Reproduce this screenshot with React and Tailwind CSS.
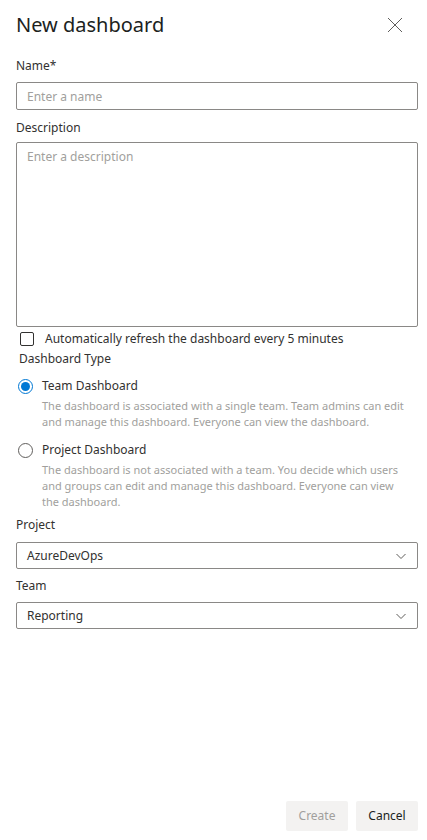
import React, { useState } from "react";

const font = { fontFamily: '"Segoe UI", "Noto Sans", "Open Sans", sans-serif' };

const Chevron = () => (
  <svg width="12" height="12" viewBox="0 0 12 12" fill="none" stroke="#605e5c" strokeWidth="1">
    <path d="M1.5 4l4.5 4.5L10.5 4" />
  </svg>
);

const Radio = ({ checked }) =>
  checked ? (
    <span className="w-[15px] h-[15px] rounded-full border-[1.5px] border-[#0078d4] flex items-center justify-center shrink-0">
      <span className="w-[9px] h-[9px] rounded-full bg-[#0078d4]" />
    </span>
  ) : (
    <span className="w-[15px] h-[15px] rounded-full border border-[#605e5c] shrink-0" />
  );

const Dropdown = ({ value }) => (
  <div className="h-[27px] border border-[#8a8886] rounded-[2px] flex items-center justify-between pl-[10px] pr-[10px] text-[12px] text-[#323130]">
    <span>{value}</span>
    <Chevron />
  </div>
);

export default function App() {
  const [type, setType] = useState("team");

  return (
    <div className="w-[427px] h-[840px] bg-white flex flex-col text-[#323130]" style={font}>
      <div className="flex items-center justify-between pl-4 pr-6 pt-[12px]">
        <h1 className="text-[20px] font-normal leading-[26px] text-[#201f1e]">New dashboard</h1>
        <svg width="16" height="16" viewBox="0 0 16 16" stroke="#605e5c" strokeWidth="1">
          <path d="M1 1l14 14M15 1L1 15" />
        </svg>
      </div>

      <div className="pl-4 pr-[9px] flex flex-col">
        <label className="text-[12px] mt-[20px] leading-[16px]">Name*</label>
        <input
          placeholder="Enter a name"
          className="mt-[8px] h-[28px] border border-[#8a8886] rounded-[2px] px-[10px] text-[12px] placeholder:text-[#a19f9d] outline-none"
        />
        <label className="text-[12px] mt-[10px] leading-[16px]">Description</label>
        <textarea
          placeholder="Enter a description"
          className="mt-[6px] h-[185px] border border-[#8a8886] rounded-[2px] px-[10px] py-[5px] text-[12px] placeholder:text-[#a19f9d] outline-none resize-none"
        />

        <div className="flex items-center mt-[4px] ml-[4px] gap-[11px]">
          <span className="w-[14px] h-[14px] border border-[#323130] rounded-[2px] shrink-0" />
          <span className="text-[12px] leading-[16px]">Automatically refresh the dashboard every 5 minutes</span>
        </div>

        <div className="text-[12px] mt-[4px] ml-[3px] leading-[16px]">Dashboard Type</div>

        <div className="mt-[11px] ml-[2px] flex flex-col">
          <div className="flex items-center gap-[9px] cursor-pointer" onClick={() => setType("team")}>
            <Radio checked={type === "team"} />
            <span className="text-[12px] leading-[16px]">Team Dashboard</span>
          </div>
          <p className="ml-[24px] mr-[12px] mt-[4px] text-[11px] leading-[16px] text-[#a19f9d]">
            The dashboard is associated with a single team. Team admins can edit and manage this dashboard. Everyone can view the dashboard.
          </p>

          <div className="flex items-center gap-[9px] mt-[12px] cursor-pointer" onClick={() => setType("project")}>
            <Radio checked={type === "project"} />
            <span className="text-[12px] leading-[16px]">Project Dashboard</span>
          </div>
          <p className="ml-[24px] mr-[12px] mt-[4px] text-[11px] leading-[16px] text-[#a19f9d]">
            The dashboard is not associated with a team. You decide which users and groups can edit and manage this dashboard. Everyone can view the dashboard.
          </p>
        </div>

        <label className="text-[12px] mt-[7px] leading-[16px]">Project</label>
        <div className="mt-[9px]">
          <Dropdown value="AzureDevOps" />
        </div>
        <label className="text-[12px] mt-[9px] leading-[16px]">Team</label>
        <div className="mt-[8px]">
          <Dropdown value="Reporting" />
        </div>
      </div>

      <div className="mt-auto flex justify-end gap-2 px-[9px] pb-[9px]">
        <button className="w-[62px] h-[30px] bg-[#f3f2f1] text-[#a19f9d] text-[12px] rounded-[2px]">Create</button>
        <button className="w-[62px] h-[30px] bg-[#f3f2f1] text-[#201f1e] text-[12px] rounded-[2px]">Cancel</button>
      </div>
    </div>
  );
}
